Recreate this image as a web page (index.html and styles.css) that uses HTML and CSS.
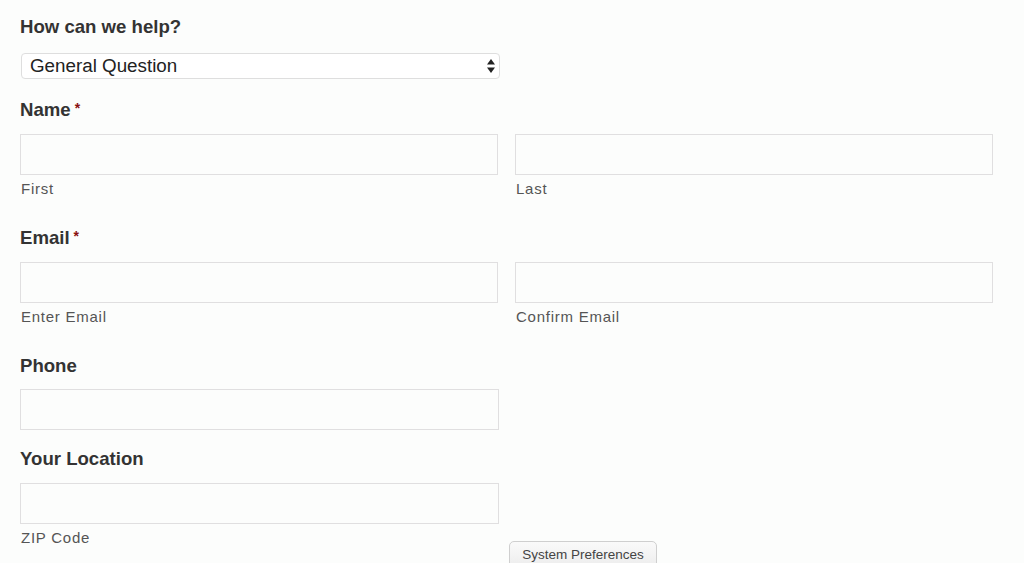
FILE: index.html
```html
<!DOCTYPE html>
<html lang="en">
<head>
  <link rel="stylesheet" href="styles.css">
</head>
<body>
  <form class="contact-form">
    <div class="group group-select">
      <label class="field-label" for="topic">How can we help?</label>
      <div class="select-wrap">
        <select id="topic">
          <option>General Question</option>
          <option>Support</option>
          <option>Sales</option>
        </select>
        <svg class="select-arrows" width="10" height="16" viewBox="0 0 10 16">
          <path d="M5 1 L9 6.5 L1 6.5 Z" fill="#222"/>
          <path d="M5 15 L9 9.5 L1 9.5 Z" fill="#222"/>
        </svg>
      </div>
    </div>

    <div class="group">
      <label class="field-label">Name<span class="req">*</span></label>
      <div class="pair">
        <div>
          <input type="text" id="first">
          <div class="sub-label">First</div>
        </div>
        <div>
          <input type="text" id="last">
          <div class="sub-label">Last</div>
        </div>
      </div>
    </div>

    <div class="group">
      <label class="field-label">Email<span class="req">*</span></label>
      <div class="pair">
        <div>
          <input type="email" id="email">
          <div class="sub-label">Enter Email</div>
        </div>
        <div>
          <input type="email" id="email2">
          <div class="sub-label">Confirm Email</div>
        </div>
      </div>
    </div>

    <div class="group group-phone">
      <label class="field-label" for="phone">Phone</label>
      <input type="tel" id="phone" class="single">
    </div>

    <div class="group">
      <label class="field-label" for="zip">Your Location</label>
      <input type="text" id="zip" class="single">
      <div class="sub-label">ZIP Code</div>
    </div>
  </form>

  <button class="sys-prefs" type="button">System Preferences</button>
</body>
</html>
```

FILE: styles.css
```css
body {
  margin: 0;
  padding: 16px 20px 0;
  background: #fcfdfc;
  font-family: 'Liberation Sans', Arial, sans-serif;
  color: #333;
  overflow: hidden;
}

.contact-form {
  width: 973px;
}

.group {
  margin-bottom: 17px;
}

.group-select {
  margin-bottom: 20px;
}

.group-phone {
  margin-bottom: 18px;
}

.field-label {
  display: block;
  font-size: 18.6px;
  font-weight: bold;
  line-height: 22px;
  color: #333;
  margin-bottom: 13px;
}

.group-select .field-label {
  margin-bottom: 15px;
}

.group-phone .field-label {
  margin-bottom: 12px;
}

.req {
  color: #8a1010;
  font-size: 14px;
  line-height: 0;
  margin-left: 4px;
  vertical-align: 3px;
}

.select-wrap {
  position: relative;
  width: 479px;
  margin-left: 1px;
}

select {
  appearance: none;
  -webkit-appearance: none;
  width: 100%;
  height: 26px;
  padding: 0 24px 2px 8px;
  border: 1px solid #dedede;
  border-radius: 4px;
  background: #fff;
  font-family: inherit;
  font-size: 18.8px;
  color: #222;
  box-sizing: border-box;
}

.select-arrows {
  position: absolute;
  right: 4px;
  top: 5px;
  pointer-events: none;
}

.pair {
  display: grid;
  grid-template-columns: 478px 478px;
  column-gap: 17px;
}

input {
  display: block;
  width: 100%;
  height: 41px;
  box-sizing: border-box;
  border: 1px solid #e0dfe0;
  background: #fcfdfc;
  font-family: inherit;
  font-size: 16px;
  padding: 0 8px;
}

input.single {
  width: 479px;
}

.sub-label {
  font-size: 15px;
  line-height: 18px;
  letter-spacing: 0.75px;
  color: #555;
  margin: 5px 0 12px 1px;
}

.sys-prefs {
  position: absolute;
  left: 509px;
  top: 541px;
  width: 148px;
  height: 28px;
  border: 1px solid #cfcfcf;
  border-radius: 5px;
  background: linear-gradient(#fafafa, #ececec);
  font-family: 'Liberation Sans', Arial, sans-serif;
  font-size: 13.5px;
  color: #444;
  padding: 0 0 2px;
}
```
